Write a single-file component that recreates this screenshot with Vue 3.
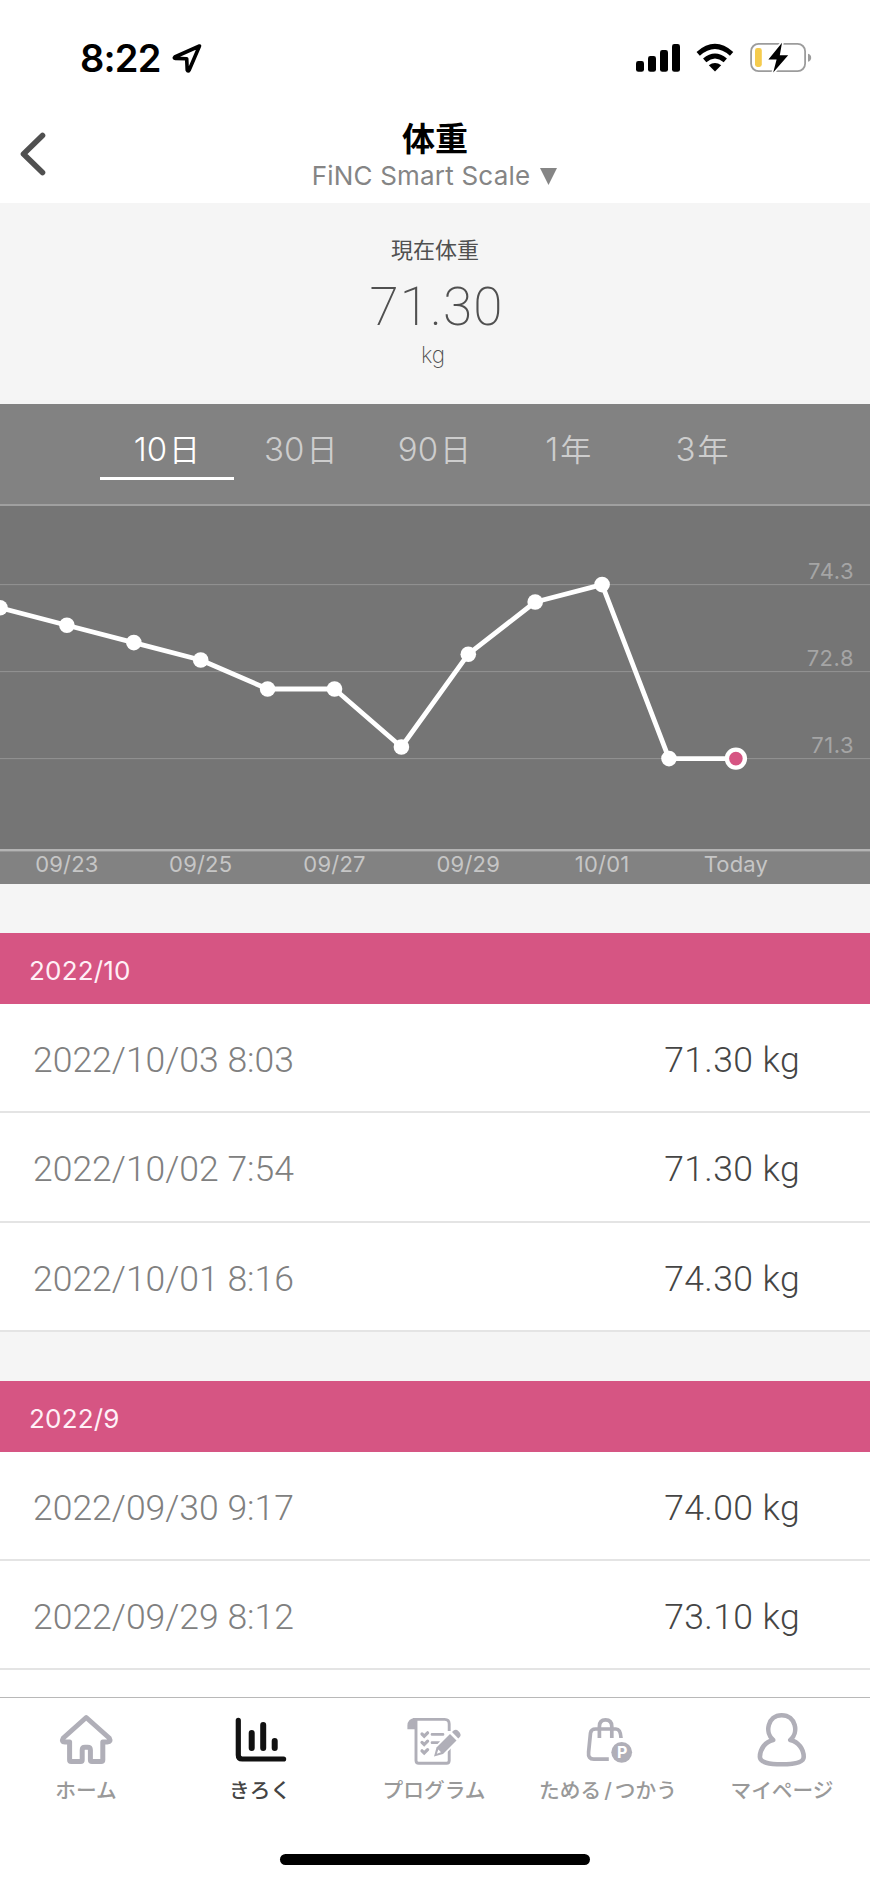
<template>
  <div class="screen">
    <header class="status-bar">
      <div class="status-left">
        <span class="clock">8:22</span>
        <svg class="location" width="32" height="32" viewBox="0 0 32 32">
          <path d="M28.5 4 L3.8 15 Q2.5 16.2 4.5 16.4 L15.7 16.7 L16.2 28 Q17 30 18.2 28 Z" fill="none" stroke="#000" stroke-width="3.6" stroke-linejoin="round" />
        </svg>
      </div>
      <svg class="status-icons" width="180" height="32" viewBox="634 42 180 32">
        <g fill="#000">
          <rect x="636" y="61" width="8" height="10.8" rx="2.4" />
          <rect x="648" y="56" width="8" height="15.8" rx="2.4" />
          <rect x="660" y="50" width="8" height="21.8" rx="2.4" />
          <rect x="672" y="44" width="8" height="27.8" rx="2.4" />
          <path d="M715 71.4 L708.8 65.2 Q715 60.6 721.2 65.2 Z" />
        </g>
        <g fill="none" stroke="#000" stroke-width="5">
          <path d="M698.2 53.8 Q715 39 731.6 53.8" />
          <path d="M704.7 60.4 Q715 51.6 725.3 60.4" />
        </g>
        <rect x="751.1" y="43.8" width="54" height="27.4" rx="7.5" fill="none" stroke="#9c9c9c" stroke-width="1.8" />
        <path d="M808 53.8 Q811.2 54.8 811.2 57.7 Q811.2 60.6 808 61.8 Z" fill="#9c9c9c" />
        <rect x="755" y="48" width="6.8" height="19" rx="2.4" fill="#f5cb4d" />
        <path d="M782 42.8 L768.4 59.6 H776.6 L773.2 72.6 L788.2 55.2 H779.8 Z" fill="#000" stroke="#fff" stroke-width="3.4" paint-order="stroke" stroke-linejoin="round" />
      </svg>
    </header>

    <nav class="nav-bar">
      <button class="back" aria-label="戻る">
        <svg width="30" height="48" viewBox="0 0 30 48">
          <path d="M24.5 5.5 L5.5 24 L24.5 42.5" fill="none" stroke="#505050" stroke-width="5.6" stroke-linecap="round" stroke-linejoin="round" />
        </svg>
      </button>
      <div class="nav-titles">
        <h1 class="nav-title">体重</h1>
        <div class="nav-device">
          <span>FiNC Smart Scale</span>
          <svg width="17" height="17" viewBox="0 0 17 17"><path d="M0 0 H17 L8.5 17 Z" fill="#858585" /></svg>
        </div>
      </div>
    </nav>

    <section class="summary">
      <p class="summary-label">現在体重</p>
      <p class="summary-value">71.30</p>
      <p class="summary-unit">kg</p>
    </section>

    <section class="chart">
      <div class="ranges">
        <button
          v-for="range in ranges"
          :key="range.num + range.unit"
          class="range"
          :class="{ active: range.active }"
        >
          <span class="range-num">{{ range.num }}</span><span class="range-unit">{{ range.unit }}</span>
        </button>
      </div>
      <svg class="plot" width="870" height="380" viewBox="0 504 870 380">
        <rect x="0" y="504" width="870" height="346" fill="#757575" />
        <rect x="0" y="504" width="870" height="2" fill="#a0a0a0" />
        <g v-for="tick in ticks" :key="tick">
          <rect x="0" :y="yOf(tick) - 0.5" width="870" height="1" fill="#949494" />
          <text class="y-label" x="854" :y="yOf(tick) - 5.5" text-anchor="end">{{ tick.toFixed(1) }}</text>
        </g>
        <polyline :points="linePoints" fill="none" stroke="#fff" stroke-width="4.8" stroke-linejoin="round" />
        <circle v-for="(p, i) in points" :key="i" :cx="p.x" :cy="p.y" r="7.8" fill="#fff" />
        <circle :cx="last.x" :cy="last.y" r="9" fill="#d65583" stroke="#fff" stroke-width="4.4" />
        <rect x="0" y="849" width="870" height="2.4" fill="#b4b4b4" />
        <text
          v-for="label in dayLabels"
          :key="label.text"
          class="x-label"
          :x="label.index * STEP"
          y="872"
          text-anchor="middle"
        >{{ label.text }}</text>
      </svg>
    </section>

    <main class="history">
      <section v-for="month in months" :key="month.title" class="month">
        <h2 class="month-title">{{ month.title }}</h2>
        <ul class="records">
          <li v-for="record in month.records" :key="record.date" class="record">
            <span class="record-date">{{ record.date }}</span>
            <span class="record-weight">{{ record.weight }} kg</span>
          </li>
        </ul>
      </section>
    </main>

    <footer class="tab-bar">
      <div class="tabs">
        <a class="tab">
          <svg class="tab-icon" viewBox="0 0 72 64" fill="none" stroke="#b0afb8" stroke-width="5" stroke-linejoin="round">
            <path d="M35.2 10.5 L12.3 31 Q10 35 14 35 H18.6 V53 Q18.6 54.6 20.2 54.6 H29.8 Q31.2 54.6 31.2 53 V43 Q31.2 40.2 34 40.2 H36.6 Q39.4 40.2 39.4 43 V53 Q39.4 54.6 41 54.6 H50.2 Q51.8 54.6 51.8 53 V35 H56.4 Q60.4 35 58.2 31 Z" />
          </svg>
          <span class="tab-label">ホーム</span>
        </a>
        <a class="tab active">
          <svg class="tab-icon" viewBox="0 0 72 64" fill="none" stroke="#111" stroke-linecap="round">
            <path d="M13.3 13.4 V48 Q13.3 52 17.3 52 H58.6" stroke-width="5.2" />
            <path d="M26.7 26 V41 M38.2 18 V41 M49.7 34 V41" stroke-width="6" />
          </svg>
          <span class="tab-label">きろく</span>
        </a>
        <a class="tab">
          <svg class="tab-icon" viewBox="0 0 72 64" fill="none" stroke="#b0afb8">
            <path d="M17 11 Q8.4 11 8.4 19 V22.3 H17 Z" fill="#b0afb8" stroke="none" />
            <path d="M14 12.4 H45.6 Q50.2 12.4 50.2 17 V24 M17 13 V53.4 Q17 56.2 19.8 56.2 H47.6 Q50.2 56.2 50.2 53.4 V41" stroke-width="2.9" />
            <path d="M23 27 L25.2 29.2 L28.6 25.8 M23 35.4 L25.2 37.6 L28.6 34.2 M23 43.8 L25.2 46 L28.6 42.6" stroke-width="3.2" stroke-linecap="round" />
            <path d="M33 27.4 H44 M33 35.7 H40 M36 46.5 H36.2" stroke-width="2.7" stroke-linecap="round" />
            <!-- pencil -->
            <path d="M35 49.5 L37.5 40.5 L51 27 L57.5 33.5 L44 47 Z" fill="#b0afb8" stroke="#fff" stroke-width="3.4" paint-order="stroke" />
            <path d="M53 25 L54.6 23.6 Q57 21.8 59.5 24.2 Q62.8 27.2 61 29.8 L59.3 31.4 Z" fill="#b0afb8" stroke="none" />
            <path d="M37.8 46.8 L39.4 42.6 L42 45.2 Z" fill="#fff" stroke="none" />
          </svg>
          <span class="tab-label">プログラム</span>
        </a>
        <a class="tab">
          <svg class="tab-icon" viewBox="0 0 72 64" fill="none" stroke="#b0afb8" stroke-width="3.7">
            <path d="M26.4 31 V19.5 Q26.4 12.8 32.5 12.8 Q38.8 12.8 38.8 19.5 V31" />
            <path d="M48 31 Q47.5 22 43 22 H22.5 Q18.2 22 17.5 26 L15.6 45 Q14.8 52.2 20.8 52.2 H35.8" />
            <circle cx="48.7" cy="45.3" r="10.4" fill="#b0afb8" stroke="none" />
            <text class="point-mark" x="49.2" y="51" text-anchor="middle" stroke="none">P</text>
          </svg>
          <span class="tab-label"><span>ためる</span><span class="slash">/</span><span>つかう</span></span>
        </a>
        <a class="tab">
          <svg class="tab-icon" viewBox="0 0 72 64" fill="none" stroke="#b0afb8" stroke-width="4.6" stroke-linejoin="round">
            <path d="M26.2 33 C17.5 26 20.5 8.2 34.7 8.2 C49 8.2 52 26 43.3 33 C51.5 35 56.7 42 56.7 50 C56.7 55.4 47 57.3 34.7 57.3 C22.4 57.3 12.9 55.4 12.9 50 C12.9 42 18 35 26.2 33 Z" />
          </svg>
          <span class="tab-label">マイページ</span>
        </a>
      </div>
      <div class="home-indicator"></div>
    </footer>
  </div>
</template>

<script setup>
import { computed } from 'vue'

const ranges = [
  { num: '10', unit: '日', active: true },
  { num: '30', unit: '日' },
  { num: '90', unit: '日' },
  { num: '1', unit: '年' },
  { num: '3', unit: '年' }
]

const STEP = 66.9
const weights = [73.9, 73.6, 73.3, 73.0, 72.5, 72.5, 71.5, 73.1, 74.0, 74.3, 71.3, 71.3]
const ticks = [74.3, 72.8, 71.3]

const dayLabels = [
  { index: 1, text: '09/23' },
  { index: 3, text: '09/25' },
  { index: 5, text: '09/27' },
  { index: 7, text: '09/29' },
  { index: 9, text: '10/01' },
  { index: 11, text: 'Today' }
]

// 58px per kilogram, 71.3kg sits on the lowest grid line
const yOf = (kg) => 758.6 - (kg - 71.3) * 58

const points = computed(() => weights.map((kg, i) => ({ x: i * STEP, y: yOf(kg) })))
const linePoints = computed(() => points.value.map((p) => `${p.x},${p.y}`).join(' '))
const last = computed(() => points.value[points.value.length - 1])

const months = [
  {
    title: '2022/10',
    records: [
      { date: '2022/10/03 8:03', weight: '71.30' },
      { date: '2022/10/02 7:54', weight: '71.30' },
      { date: '2022/10/01 8:16', weight: '74.30' }
    ]
  },
  {
    title: '2022/9',
    records: [
      { date: '2022/09/30 9:17', weight: '74.00' },
      { date: '2022/09/29 8:12', weight: '73.10' }
    ]
  }
]
</script>

<style>
body {
  margin: 0;
  background: #fff;
}
</style>

<style scoped>
.screen {
  width: 870px;
  height: 1883px;
  display: flex;
  flex-direction: column;
  overflow: hidden;
  background: #fff;
  font-family: Inter, "Noto Sans CJK JP", sans-serif;
}

h1,
h2,
p,
ul {
  margin: 0;
  padding: 0;
  font-weight: 400;
}

button {
  border: 0;
  padding: 0;
  background: none;
  font: inherit;
}

svg {
  display: block;
  flex-shrink: 0;
}

.status-bar {
  height: 116px;
  flex-shrink: 0;
  box-sizing: border-box;
  padding: 0 56px 0 80px;
  display: flex;
  align-items: center;
  justify-content: space-between;
}

.status-left {
  display: flex;
  align-items: center;
  gap: 10px;
}

.clock {
  font-size: 38px;
  font-weight: 600;
  line-height: 40px;
  letter-spacing: -0.8px;
}

.nav-bar {
  height: 87px;
  flex-shrink: 0;
  display: grid;
  grid-template-columns: 100px 1fr 100px;
}

.back {
  display: flex;
  padding: 14px 0 0 18px;
}

.nav-titles {
  display: flex;
  flex-direction: column;
  align-items: center;
}

.nav-title {
  padding-top: 1px;
  font-size: 33px;
  line-height: 44px;
  font-weight: 700;
}

.nav-device {
  display: flex;
  align-items: center;
  gap: 10px;
  padding-right: 1px;
  font-size: 26px;
  line-height: 30px;
  letter-spacing: 0.2px;
  color: #858585;
}

.summary {
  height: 201px;
  flex-shrink: 0;
  background: #f5f5f5;
  color: #505050;
  text-align: center;
}

.summary-label {
  padding-top: 31px;
  font-size: 22px;
  line-height: 32px;
}

.summary-value {
  padding: 9px 0 0 3px;
  font-family: Roboto, "Liberation Sans", sans-serif;
  font-size: 53px;
  line-height: 64px;
  font-weight: 200;
  letter-spacing: 1.1px;
}

.summary-unit {
  padding: 1px 4px 0 0;
  font-size: 22.5px;
  line-height: 30px;
  font-weight: 200;
}

.chart {
  height: 480px;
  flex-shrink: 0;
  background: #828282;
}

.ranges {
  height: 100px;
  box-sizing: border-box;
  padding: 0 101px 24px 100px;
  display: grid;
  grid-template-columns: repeat(5, 1fr);
}

.range {
  display: flex;
  justify-content: center;
  align-items: baseline;
  gap: 2px;
  padding-top: 18px;
  border-bottom: 3px solid transparent;
  color: #cdcdcd;
  font-size: 33px;
  line-height: 54px;
  font-weight: 300;
}

.range.active {
  color: #fff;
  border-bottom-color: #fff;
}

.range-unit {
  font-size: 31px;
  line-height: 40px;
  font-weight: 350;
}

.y-label,
.x-label {
  font-size: 22px;
  letter-spacing: 0.2px;
}

.y-label {
  fill: #a5a5a5;
  letter-spacing: 0.5px;
}

.x-label {
  fill: #c6c6c6;
}

.history {
  flex: 1;
  min-height: 0;
  overflow: hidden;
}

.month {
  padding-top: 49px;
  background: #f5f5f5;
}

.month-title {
  height: 71px;
  box-sizing: border-box;
  padding-left: 29px;
  background: #d65583;
  color: #fff0f7;
  font-size: 26px;
  line-height: 76px;
  letter-spacing: 0.2px;
}

.records {
  list-style: none;
}

.record {
  height: 109.3px;
  box-sizing: border-box;
  padding: 5px 70px 0 33px;
  border-bottom: 2px solid #e4e4e4;
  display: flex;
  align-items: center;
  justify-content: space-between;
  background: #fff;
  font-family: Roboto, "Liberation Sans", sans-serif;
  font-size: 35.5px;
  font-weight: 300;
}

.record-date {
  color: #808080;
}

.record-weight {
  color: #454545;
  letter-spacing: 0.4px;
}

.tab-bar {
  height: 186px;
  flex-shrink: 0;
  box-sizing: border-box;
  border-top: 1px solid #b8b8b8;
  background: #fff;
}

.tabs {
  display: grid;
  grid-template-columns: repeat(5, 1fr);
  height: 156px;
}

.tab {
  display: flex;
  flex-direction: column;
  align-items: center;
  padding-top: 9px;
  color: #999;
}

.tab.active {
  color: #444;
}

.tab-icon {
  width: 72px;
  height: 64px;
}

.tab-label {
  display: flex;
  padding: 5px 2px 0 0;
  font-size: 20.7px;
  line-height: 30px;
  font-weight: 500;
  white-space: nowrap;
}

.slash {
  padding: 0 3px;
}

.point-mark {
  fill: #fff;
  font-size: 16px;
  font-weight: 700;
}

.home-indicator {
  width: 310px;
  height: 11px;
  margin: 0 auto;
  border-radius: 6px;
  background: #000;
}
</style>
